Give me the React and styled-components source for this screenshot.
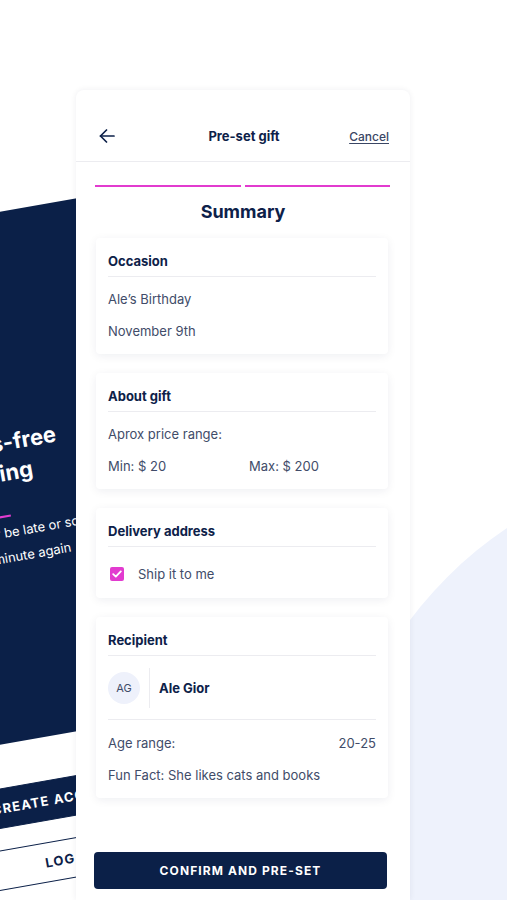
import React from 'react';
import styled, { createGlobalStyle } from 'styled-components';

const GlobalStyle = createGlobalStyle`
  html, body {
    margin: 0;
    padding: 0;
  }
  body {
    font-family: Inter, "Noto Sans", sans-serif;
    background: #ffffff;
  }
`;

const Stage = styled.div`
  position: relative;
  width: 507px;
  height: 900px;
  overflow: hidden;
  background: #ffffff;
  padding: 90px 0 0 76px;
  box-sizing: border-box;
`;

/* decorative circle behind the right side */
const Blob = styled.div`
  position: absolute;
  left: 330px;
  top: 460px;
  width: 800px;
  height: 800px;
  border-radius: 50%;
  background: #eef2fc;
`;

/* the tilted onboarding screen peeking from the left */
const BackScreen = styled.div`
  position: absolute;
  left: -200px;
  top: 247px;
  width: 320px;
  transform: rotate(-10deg);
  transform-origin: 0 0;
`;

const Hero = styled.div`
  height: 525px;
  background: #0b2048;
  padding: 213px 0 0 97px;
  box-sizing: border-box;
  color: #ffffff;
`;

const HeroTitle = styled.h2`
  margin: 0;
  font-size: 22px;
  line-height: 30px;
  font-weight: 700;
`;

const PinkRule = styled.div`
  width: 64px;
  height: 2px;
  background: #e23bcf;
  margin-top: 27px;
`;

const HeroText = styled.p`
  margin: 3px 0 0 14px;
  font-size: 13px;
  line-height: 25px;
`;

const BackButton = styled.div`
  margin: ${(p) => (p.$outline ? '21px' : '43px')} 24px 0;
  height: 40px;
  display: flex;
  align-items: center;
  justify-content: center;
  box-sizing: border-box;
  font-size: 13px;
  font-weight: 700;
  letter-spacing: 1.2px;
  background: ${(p) => (p.$outline ? '#ffffff' : '#0b2048')};
  color: ${(p) => (p.$outline ? '#0b2048' : '#ffffff')};
  border: 1px solid #0b2048;
  border-radius: 2px;
`;

const Phone = styled.div`
  position: relative;
  z-index: 1;
  width: 334px;
  height: 810px;
  background: #ffffff;
  border-radius: 8px 8px 0 0;
  box-shadow: 0 0 6px rgba(20, 30, 60, 0.07);
  display: flex;
  flex-direction: column;
`;

const Header = styled.div`
  display: grid;
  grid-template-columns: 1fr auto 1fr;
  align-items: center;
  height: 20px;
  padding: 36px 21px 15px 23px;
  border-bottom: 1px solid #ececf0;
`;

const BackBtn = styled.button`
  justify-self: start;
  border: 0;
  background: none;
  padding: 0;
  display: flex;
  cursor: pointer;
`;

const Title = styled.div`
  font-size: 13px;
  font-weight: 700;
  color: #0d2149;
`;

const Cancel = styled.a`
  justify-self: end;
  font-size: 12px;
  font-weight: 500;
  color: #3a4664;
  text-decoration: underline;
  text-underline-offset: 2px;
`;

const Progress = styled.div`
  display: flex;
  gap: 4px;
  padding: 0 20px 0 19px;
  margin-top: 23px;
`;

const Step = styled.div`
  flex: 1;
  height: 2px;
  background: #e23bcf;
`;

const Heading = styled.h1`
  margin: 13px 0 0;
  font-size: 18px;
  line-height: 24px;
  font-weight: 700;
  color: #0d2149;
  text-align: center;
`;

const CardList = styled.div`
  display: flex;
  flex-direction: column;
  gap: 19px;
  padding: 14px 22px 0 20px;
`;

const Card = styled.section`
  background: #ffffff;
  border-radius: 4px;
  box-shadow: 0 2px 10px rgba(13, 33, 72, 0.07);
  padding: 14px 12px;
`;

const CardTitle = styled.h3`
  margin: 0;
  font-size: 13px;
  line-height: 18px;
  font-weight: 700;
  color: #0d2149;
  padding-bottom: 6px;
  border-bottom: 1px solid #ececf0;
`;

const Rows = styled.div`
  display: flex;
  flex-direction: column;
  gap: 14px;
  margin-top: ${(p) => p.$top || 13}px;
`;

const Text = styled.div`
  font-size: 13px;
  line-height: 18px;
  color: #414c69;
`;

const Split = styled.div`
  display: grid;
  grid-template-columns: 1fr 1fr;
  column-gap: 14px;
`;

const Between = styled.div`
  display: flex;
  justify-content: space-between;
`;

const CheckRow = styled.label`
  display: flex;
  align-items: center;
  gap: 14px;
  height: 20px;
  margin-top: 17px;
  padding-left: 2px;
`;

const Box = styled.span`
  width: 14px;
  height: 14px;
  border-radius: 2px;
  background: #e23bcf;
  display: flex;
  align-items: center;
  justify-content: center;
`;

const Person = styled.div`
  display: flex;
  align-items: center;
  height: 40px;
  margin-top: 12px;
  padding-bottom: 11px;
  border-bottom: 1px solid #ececf0;
`;

const Avatar = styled.div`
  width: 32px;
  height: 32px;
  border-radius: 50%;
  background: #eef1fb;
  display: flex;
  align-items: center;
  justify-content: center;
  font-size: 11px;
  color: #414c69;
`;

const Divider = styled.div`
  width: 1px;
  height: 40px;
  background: #ececf0;
  margin: 0 9px;
`;

const Name = styled.div`
  font-size: 13px;
  font-weight: 700;
  color: #0d2149;
`;

const Footer = styled.div`
  margin-top: auto;
  padding: 0 23px 11px 18px;
`;

const Confirm = styled.button`
  width: 100%;
  height: 37px;
  border: 0;
  border-radius: 4px;
  background: #0b2048;
  color: #ffffff;
  font-family: Inter, "Noto Sans", sans-serif;
  font-size: 12px;
  font-weight: 700;
  letter-spacing: 1.1px;
`;

const ArrowLeft = () => (
  <svg width="16" height="14" viewBox="0 0 16 14" fill="none" stroke="#0d2149" strokeWidth="1.7" strokeLinecap="round" strokeLinejoin="round">
    <path d="M15 7H1.5" />
    <path d="M7.5 1L1.5 7l6 6" />
  </svg>
);

const Check = () => (
  <svg width="10" height="8" viewBox="0 0 10 8" fill="none" stroke="#ffffff" strokeWidth="1.8" strokeLinecap="round" strokeLinejoin="round">
    <path d="M1.2 4.2l2.6 2.4L8.8 1.4" />
  </svg>
);

const App = () => {
  return (
    <>
      <GlobalStyle />
      <Stage>
        <Blob />
        <BackScreen>
          <Hero>
            <HeroTitle>
              Stress-free
              <br />
              planning
            </HeroTitle>
            <PinkRule />
            <HeroText>
              Never be late or scramble
              <br />
              last minute again
            </HeroText>
          </Hero>
          <BackButton>CREATE ACCOUNT</BackButton>
          <BackButton $outline>LOG IN</BackButton>
        </BackScreen>

        <Phone>
          <Header>
            <BackBtn aria-label="Back">
              <ArrowLeft />
            </BackBtn>
            <Title>Pre-set gift</Title>
            <Cancel>Cancel</Cancel>
          </Header>

          <Progress>
            <Step />
            <Step />
          </Progress>

          <Heading>Summary</Heading>

          <CardList>
            <Card>
              <CardTitle>Occasion</CardTitle>
              <Rows>
                <Text>Ale’s Birthday</Text>
                <Text>November 9th</Text>
              </Rows>
            </Card>

            <Card>
              <CardTitle>About gift</CardTitle>
              <Rows>
                <Text>Aprox price range:</Text>
                <Split>
                  <Text>Min: $ 20</Text>
                  <Text>Max: $ 200</Text>
                </Split>
              </Rows>
            </Card>

            <Card>
              <CardTitle>Delivery address</CardTitle>
              <CheckRow>
                <Box>
                  <Check />
                </Box>
                <Text>Ship it to me</Text>
              </CheckRow>
            </Card>

            <Card>
              <CardTitle>Recipient</CardTitle>
              <Person>
                <Avatar>AG</Avatar>
                <Divider />
                <Name>Ale Gior</Name>
              </Person>
              <Rows $top={14}>
                <Between>
                  <Text>Age range:</Text>
                  <Text>20-25</Text>
                </Between>
                <Text>Fun Fact: She likes cats and books</Text>
              </Rows>
            </Card>
          </CardList>

          <Footer>
            <Confirm>CONFIRM AND PRE-SET</Confirm>
          </Footer>
        </Phone>
      </Stage>
    </>
  );
};

export default App;
